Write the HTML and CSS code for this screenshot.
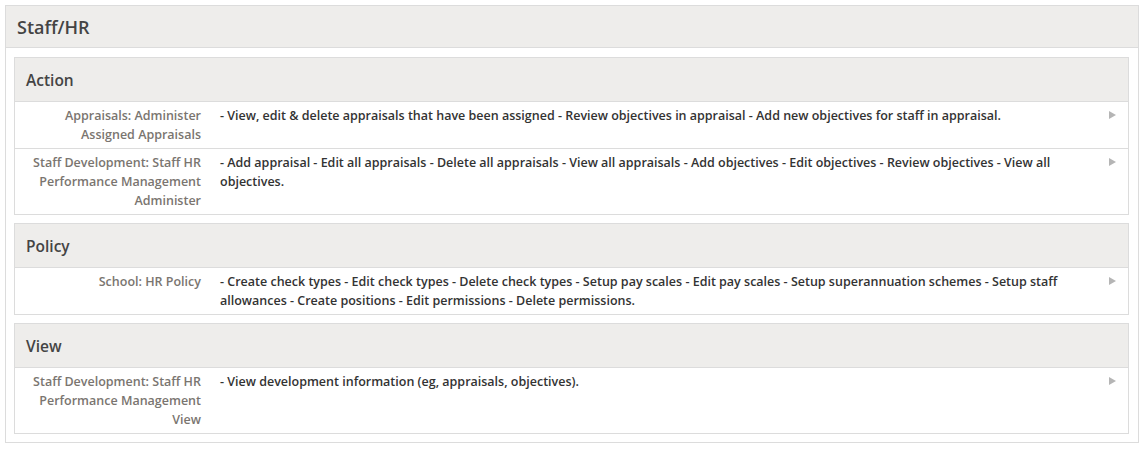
FILE: index.html
```html
<!DOCTYPE html>
<html>
<head>
<meta charset="utf-8">
<link rel="stylesheet" href="styles.css">
</head>
<body>
<div class="panel">
  <div class="panel-head">Staff/HR</div>
  <div class="panel-body">
    <div class="group">
      <div class="group-head">Action</div>
      <div class="row">
        <div class="label">Appraisals: Administer Assigned Appraisals</div>
        <div class="desc">- View, edit &amp; delete appraisals that have been assigned - Review objectives in appraisal - Add new objectives for staff in appraisal.</div>
        <div class="arrow"></div>
      </div>
      <div class="row">
        <div class="label">Staff Development: Staff HR Performance Management Administer</div>
        <div class="desc">- Add appraisal - Edit all appraisals - Delete all appraisals - View all appraisals - Add objectives - Edit objectives - Review objectives - View all objectives.</div>
        <div class="arrow"></div>
      </div>
    </div>
    <div class="group">
      <div class="group-head">Policy</div>
      <div class="row">
        <div class="label">School: HR Policy</div>
        <div class="desc">- Create check types - Edit check types - Delete check types - Setup pay scales - Edit pay scales - Setup superannuation schemes - Setup staff allowances - Create positions - Edit permissions - Delete permissions.</div>
        <div class="arrow"></div>
      </div>
    </div>
    <div class="group">
      <div class="group-head">View</div>
      <div class="row">
        <div class="label">Staff Development: Staff HR Performance Management View</div>
        <div class="desc">- View development information (eg, appraisals, objectives).</div>
        <div class="arrow"></div>
      </div>
    </div>
  </div>
</div>
</body>
</html>
```
FILE: styles.css
```css
* { box-sizing: border-box; }
body {
  margin: 0;
  padding: 5px 7px 0 5px;
  font-family: "Open Sans", "Noto Sans", sans-serif;
  background: #fff;
}
.panel {
  border: 1px solid #dcdcdc;
  width: 1134px;
}
.panel-head {
  background: #eeedeb;
  border-bottom: 1px solid #dcdcdc;
  height: 42px;
  padding: 0 11px;
  display: flex;
  align-items: center;
  font-size: 18px;
  font-weight: 600;
  color: #444;
}
.panel-body {
  padding: 9px 9px 8px 8px;
  display: flex;
  flex-direction: column;
  gap: 8px;
}
.group {
  border: 1px solid #dcdcdc;
}
.group-head {
  background: #eeedeb;
  height: 43px;
  padding: 0 11px;
  display: flex;
  align-items: center;
  font-size: 15.5px;
  font-weight: 600;
  color: #444;
}
.row {
  display: flex;
  border-top: 1px solid #dcdcdc;
  padding: 4px 0 4px;
  font-size: 12.5px;
  line-height: 19px;
  font-weight: 600;
}
.label {
  width: 186px;
  flex: none;
  padding-left: 14px;
  text-align: right;
  color: #7a7570;
}
.desc {
  flex: 1;
  margin-left: 19px;
  color: #333;
}
.arrow {
  flex: none;
  width: 0; height: 0;
  margin: 5px 12px 0 40px;
  border-left: 7px solid #b5b5b5;
  border-top: 4.5px solid transparent;
  border-bottom: 4.5px solid transparent;
}
```
